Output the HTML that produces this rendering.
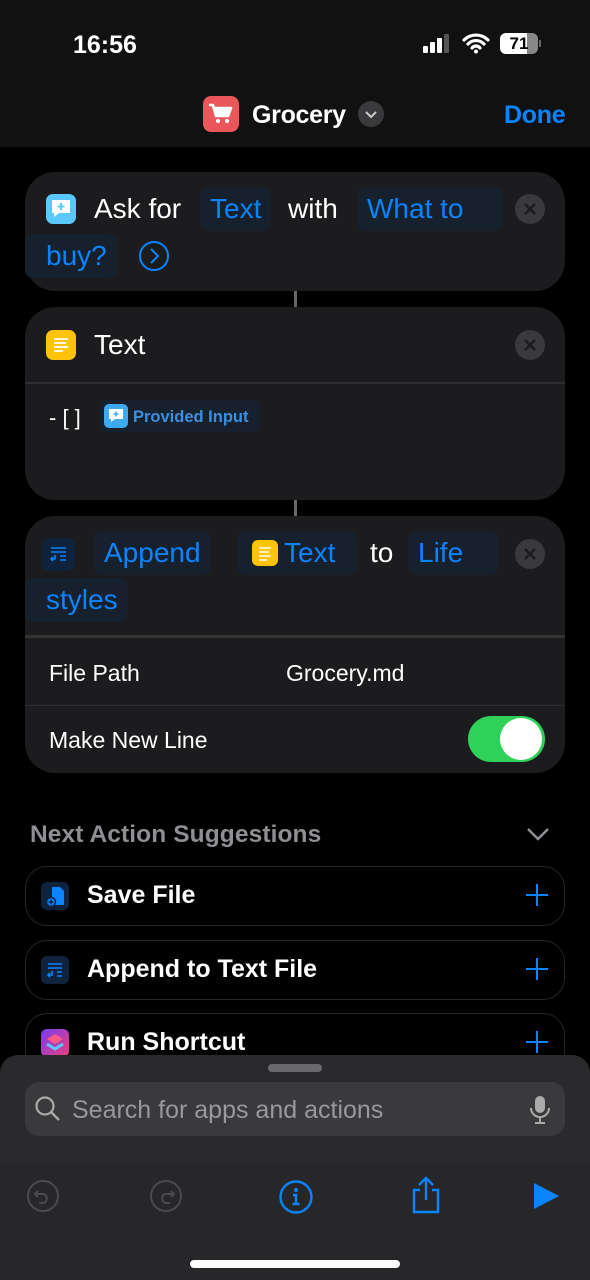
<!DOCTYPE html>
<html><head><meta charset="utf-8"><style>
*{margin:0;padding:0;box-sizing:border-box}
body{width:590px;height:1280px;background:#000;font-family:"Liberation Sans",sans-serif;color:#fff;position:relative;overflow:hidden}
.a{position:absolute}
.card{position:absolute;left:25px;width:540px;background:#1c1c1e;border-radius:30px}
.t{position:absolute;font-size:28px;line-height:34px;white-space:nowrap}
.tok{position:absolute;background:#17212e;border-radius:8px;color:#0a84ff;font-size:28px;line-height:44px;height:44px;padding:0 10px;white-space:nowrap}
.x{position:absolute;width:30px;height:30px;border-radius:50%;background:#3a3a3c}
.div{position:absolute;left:0;width:540px;height:2px;background:#2e2e30}
.sug{position:absolute;left:25px;width:540px;height:60px;border:1.5px solid #262628;border-radius:22px;background:#000}
.sug .l{position:absolute;left:61px;top:12px;font-size:25px;font-weight:bold;line-height:32px}
.plus{position:absolute;right:16px;top:17px;width:22px;height:22px}
.plus:before{content:"";position:absolute;left:10px;top:0;width:2px;height:22px;background:#0a84ff}
.plus:after{content:"";position:absolute;left:0;top:10px;width:22px;height:2px;background:#0a84ff}
.ico{position:absolute;left:15px;top:15px;width:28px;height:28px;border-radius:6px;background:#10233d}
</style></head><body>
<div class="a" style="left:0;top:0;width:590px;height:147px;background:#111"></div>
<div class="t" style="left:73px;top:28px;font-size:25px;font-weight:bold">16:56</div>
<div class="a" style="left:423px;top:46px;width:5px;height:7px;background:#fff;border-radius:1px"></div>
<div class="a" style="left:430px;top:42px;width:5px;height:11px;background:#fff;border-radius:1px"></div>
<div class="a" style="left:437px;top:38px;width:5px;height:15px;background:#fff;border-radius:1px"></div>
<div class="a" style="left:444px;top:34px;width:5px;height:19px;background:#555;border-radius:1px"></div>
<svg class="a" style="left:462px;top:32px" width="28" height="22" viewBox="0 0 28 22"><path d="M2 8a17 17 0 0 1 24 0M6 12a11 11 0 0 1 16 0M10 16a5 5 0 0 1 8 0" stroke="#fff" stroke-width="3.2" fill="none" stroke-linecap="round"/><circle cx="14" cy="19.5" r="2" fill="#fff"/></svg>
<div class="a" style="left:500px;top:33px;width:38px;height:21px;border-radius:6px;background:#888;overflow:hidden"><div style="width:27px;height:21px;background:#fff"></div></div>
<div class="a" style="left:539px;top:40px;width:2px;height:7px;background:#666"></div>
<div class="t" style="left:500px;top:33px;width:38px;text-align:center;color:#000;font-size:17px;line-height:21px;font-weight:bold">71</div>
<div class="a" style="left:203px;top:96px;width:36px;height:36px;border-radius:8px;background:#e9575b"></div>
<svg class="a" style="left:207px;top:102px" width="28" height="24" viewBox="0 0 28 24"><path d="M2 3h4l3 11h12l3-8H8" stroke="#fff" stroke-width="2.6" fill="none" stroke-linejoin="round"/><rect x="8" y="7" width="14" height="6" fill="#fff"/><circle cx="11" cy="19" r="2" fill="#fff"/><circle cx="20" cy="19" r="2" fill="#fff"/></svg>
<div class="t" style="left:252px;top:98px;font-size:25px;font-weight:bold;letter-spacing:-0.3px">Grocery</div>
<div class="a" style="left:358px;top:101px;width:26px;height:26px;border-radius:50%;background:#3a3a3c"></div>
<svg class="a" style="left:364px;top:110px" width="14" height="9"><path d="M2 2l5 5 5-5" stroke="#ccc" stroke-width="2" fill="none"/></svg>
<div class="t" style="left:504px;top:98px;font-size:25px;font-weight:bold;color:#0a84ff;letter-spacing:-0.3px">Done</div>

<div class="card" style="top:172px;height:119px">
 <div class="a" style="left:21px;top:22px;width:30px;height:30px;border-radius:7px;background:#5ac8fa"></div>
 <svg class="a" style="left:25px;top:26px" width="22" height="22"><path d="M2 2h18v13H9l-5 4v-4H2z" fill="#fff"/><path d="M11 5v7M7.5 8.5h7" stroke="#5ac8fa" stroke-width="2"/></svg>
 <div class="t" style="left:69px;top:20px">Ask for</div>
 <div class="tok" style="left:175px;top:15px">Text</div>
 <div class="t" style="left:263px;top:20px">with</div>
 <div class="tok" style="left:332px;top:15px;width:145px">What to</div>
 <div class="tok" style="left:0;top:62px;padding-left:21px">buy?</div>
 <div class="a" style="left:114px;top:69px;width:30px;height:30px;border-radius:50%;border:2px solid #0a84ff"></div>
 <svg class="a" style="left:114px;top:69px" width="30" height="30"><path d="M12 8l7 7-7 7" stroke="#0a84ff" stroke-width="2" fill="none"/></svg>
 <div class="x" style="left:490px;top:22px"></div>
 <svg class="a" style="left:490px;top:22px" width="30" height="30"><path d="M10 10l10 10M20 10L10 20" stroke="#1c1c1e" stroke-width="2.5"/></svg>
</div>
<div class="a" style="left:294px;top:291px;width:3px;height:16px;background:#666"></div>
<div class="card" style="top:307px;height:193px">
 <div class="a" style="left:21px;top:23px;width:30px;height:30px;border-radius:7px;background:#ffc40a"></div>
 <svg class="a" style="left:21px;top:23px" width="30" height="30"><path d="M8 9h14M8 13h12M8 17h14M8 21h9" stroke="#fff" stroke-width="1.8"/></svg>
 <div class="t" style="left:69px;top:21px">Text</div>
 <div class="div" style="top:75px"></div>
 <div class="t" style="left:24px;top:94px;font-size:22px;line-height:34px">- [ ]</div>
 <div class="a" style="left:75px;top:93px;width:160px;height:32px;background:#17212e;border-radius:6px"></div>
 <div class="a" style="left:79px;top:97px;width:24px;height:24px;border-radius:5px;background:#3fa9ef"></div>
 <svg class="a" style="left:81px;top:99px" width="20" height="20"><path d="M3 3h14v10H9l-4 3v-3H3z" fill="#fff"/><path d="M10 5.5v5M7.5 8h5" stroke="#3fa9ef" stroke-width="1.6"/></svg>
 <div class="t" style="left:108px;top:98px;font-size:16.5px;line-height:24px;color:#3b8fe0;font-weight:bold">Provided Input</div>
 <div class="x" style="left:490px;top:23px"></div>
 <svg class="a" style="left:490px;top:23px" width="30" height="30"><path d="M10 10l10 10M20 10L10 20" stroke="#1c1c1e" stroke-width="2.5"/></svg>
</div>
<div class="a" style="left:294px;top:500px;width:3px;height:16px;background:#666"></div>
<div class="card" style="top:516px;height:257px">
 <div class="a" style="left:17px;top:22px;width:33px;height:33px;border-radius:7px;background:#10233d"></div>
 <svg class="a" style="left:17px;top:22px" width="33" height="33"><path d="M9 10h15M9 14h15M18 18h6M18 22h6M13 17v4H9M11 19l-2 2 2 2" stroke="#0a84ff" stroke-width="1.6" fill="none"/></svg>
 <div class="tok" style="left:69px;top:15px">Append</div>
 <div class="tok" style="left:212px;top:15px;padding-left:16px;width:120px"></div>
 <div class="a" style="left:227px;top:24px;width:26px;height:26px;border-radius:6px;background:#ffc40a"></div>
 <svg class="a" style="left:227px;top:24px" width="26" height="26"><path d="M7 8h12M7 12h10M7 16h12M7 20h8" stroke="#fff" stroke-width="1.6"/></svg>
 <div class="t" style="left:259px;top:20px;color:#0a84ff">Text</div>
 <div class="t" style="left:345px;top:20px">to</div>
 <div class="tok" style="left:383px;top:15px;width:90px">Life</div>
 <div class="tok" style="left:0;top:62px;padding-left:21px">styles</div>
 <div class="x" style="left:490px;top:23px"></div>
 <svg class="a" style="left:490px;top:23px" width="30" height="30"><path d="M10 10l10 10M20 10L10 20" stroke="#1c1c1e" stroke-width="2.5"/></svg>
 <div class="div" style="top:119px;height:3px;background:#333"></div>
 <div class="t" style="left:24px;top:140px;font-size:23px">File Path</div>
 <div class="t" style="left:261px;top:140px;font-size:23px">Grocery.md</div>
 <div class="div" style="top:189px;height:1px"></div>
 <div class="t" style="left:24px;top:207px;font-size:23px">Make New Line</div>
 <div class="a" style="left:443px;top:200px;width:77px;height:46px;border-radius:23px;background:#30d158"></div>
 <div class="a" style="left:475px;top:202px;width:42px;height:42px;border-radius:50%;background:#fff"></div>
</div>
<div class="t" style="left:30px;top:818px;font-size:24.5px;color:#8e8e93;font-weight:bold;letter-spacing:0.1px">Next Action Suggestions</div>
<svg class="a" style="left:526px;top:826px" width="24" height="16"><path d="M2 3l10 10L22 3" stroke="#8e8e93" stroke-width="2.5" fill="none"/></svg>
<div class="sug" style="top:866px"><div class="ico"></div><svg class="a" style="left:15px;top:15px" width="28" height="28"><path d="M11 5h8l4 4v14H11z" fill="#0a84ff"/><circle cx="10" cy="20" r="4.5" fill="#0a84ff" stroke="#10233d" stroke-width="1.5"/><path d="M10 17.5v5M7.5 20h5" stroke="#10233d" stroke-width="1.5"/></svg><div class="l">Save File</div><div class="plus"></div></div>
<div class="sug" style="top:940px"><div class="ico"></div><svg class="a" style="left:15px;top:15px" width="28" height="28"><path d="M7 8h14M7 12h14M16 16h5M16 20h5M11 15v4H7M9 17l-2 2 2 2" stroke="#0a84ff" stroke-width="1.6" fill="none"/></svg><div class="l">Append to Text File</div><div class="plus"></div></div>
<div class="sug" style="top:1013px;height:70px"><div class="ico" style="background:linear-gradient(135deg,#7b3cf0,#e8407a)"></div><svg class="a" style="left:15px;top:15px" width="28" height="28"><path d="M14 5l8 5-8 5-8-5z" fill="#ff5a8a"/><path d="M6 15l8 5 8-5" stroke="#5ac8fa" stroke-width="3" fill="none"/></svg><div class="l">Run Shortcut</div><div class="plus"></div></div>
<div class="a" style="left:0;top:1055px;width:590px;height:108px;background:#2a2a2c;border-radius:18px 18px 0 0"></div>
<div class="a" style="left:268px;top:1064px;width:54px;height:8px;border-radius:4px;background:#6a6a6e"></div>
<div class="a" style="left:25px;top:1082px;width:540px;height:54px;border-radius:14px;background:#3a3a3c"></div>
<svg class="a" style="left:34px;top:1095px" width="28" height="28"><circle cx="11" cy="11" r="8.5" stroke="#aaa" stroke-width="2.2" fill="none"/><path d="M17 17l8 8" stroke="#aaa" stroke-width="2.5"/></svg>
<div class="t" style="left:72px;top:1093px;font-size:25px;color:#98989d">Search for apps and actions</div>
<svg class="a" style="left:529px;top:1095px" width="22" height="30"><rect x="6" y="1" width="10" height="17" rx="5" fill="#aaa"/><path d="M2 13a9 9 0 0 0 18 0M11 22v5M6 28h10" stroke="#aaa" stroke-width="2" fill="none"/></svg>
<div class="a" style="left:0;top:1163px;width:590px;height:117px;background:#272729"></div>
<svg class="a" style="left:25px;top:1178px" width="36" height="36"><circle cx="18" cy="18" r="15" stroke="#4a4a4c" stroke-width="2" fill="none"/><path d="M13 13l-3 3 3 3M10 16h9a5 5 0 0 1 0 9h-5" stroke="#4a4a4c" stroke-width="2" fill="none"/></svg>
<svg class="a" style="left:148px;top:1178px" width="36" height="36"><circle cx="18" cy="18" r="15" stroke="#4a4a4c" stroke-width="2" fill="none"/><path d="M23 13l3 3-3 3M26 16h-9a5 5 0 0 0 0 9h5" stroke="#4a4a4c" stroke-width="2" fill="none"/></svg>
<svg class="a" style="left:277px;top:1178px" width="38" height="38"><circle cx="19" cy="19" r="15.5" stroke="#0a84ff" stroke-width="2.4" fill="none"/><circle cx="19" cy="12" r="2" fill="#0a84ff"/><path d="M16 17h3v9M15.5 26h7" stroke="#0a84ff" stroke-width="2.4" fill="none"/></svg>
<svg class="a" style="left:408px;top:1175px" width="36" height="40"><path d="M18 3v22M11 10l7-7 7 7M12 15H6v22h24V15h-6" stroke="#0a84ff" stroke-width="2.4" fill="none"/></svg>
<svg class="a" style="left:531px;top:1181px" width="30" height="30"><path d="M3 2l25 13L3 28z" fill="#0a84ff"/></svg>
<div class="a" style="left:190px;top:1260px;width:210px;height:8px;border-radius:4px;background:#fff"></div>
</body></html>
